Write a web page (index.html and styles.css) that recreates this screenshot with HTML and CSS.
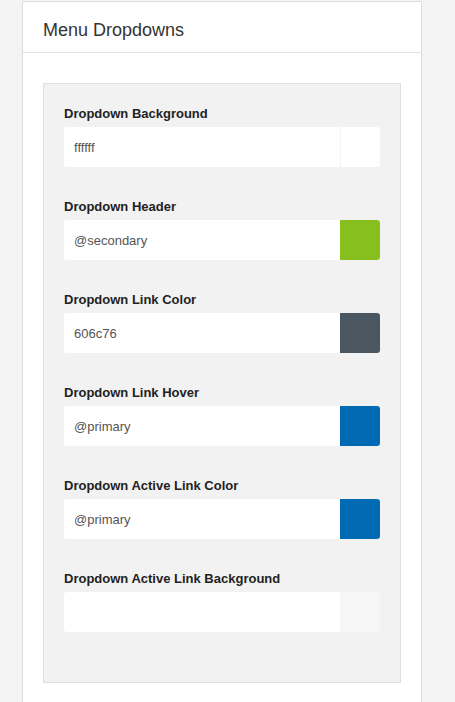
FILE: index.html
```html
<!DOCTYPE html>
<html>
<head>
<meta charset="utf-8">
<link rel="stylesheet" href="styles.css">
</head>
<body>
<div class="card">
  <div class="card-header">Menu Dropdowns</div>
  <div class="card-body">
    <div class="panel">
      <div class="field">
        <div class="label">Dropdown Background</div>
        <div class="input-row"><div class="input">ffffff</div><div class="swatch sw-white"></div></div>
      </div>
      <div class="field">
        <div class="label">Dropdown Header</div>
        <div class="input-row"><div class="input">@secondary</div><div class="swatch sw-green"></div></div>
      </div>
      <div class="field">
        <div class="label">Dropdown Link Color</div>
        <div class="input-row"><div class="input">606c76</div><div class="swatch sw-slate"></div></div>
      </div>
      <div class="field">
        <div class="label">Dropdown Link Hover</div>
        <div class="input-row"><div class="input">@primary</div><div class="swatch sw-blue"></div></div>
      </div>
      <div class="field">
        <div class="label">Dropdown Active Link Color</div>
        <div class="input-row"><div class="input">@primary</div><div class="swatch sw-blue"></div></div>
      </div>
      <div class="field">
        <div class="label">Dropdown Active Link Background</div>
        <div class="input-row"><div class="input"></div><div class="swatch sw-empty"></div></div>
      </div>
    </div>
  </div>
</div>
</body>
</html>
```
FILE: styles.css
```css
html, body {
  margin: 0;
  padding: 0;
  background: #f3f3f3;
  font-family: "Liberation Sans", Arial, sans-serif;
}
.card {
  margin: 1px 0 0 22px;
  width: 398px;
  background: #fff;
  border: 1px solid #dddddd;
  border-bottom: none;
  min-height: 720px;
}
.card-header {
  height: 51px;
  box-sizing: border-box;
  padding: 6px 20px 0 20px;
  display: flex;
  align-items: center;
  font-size: 18px;
  color: #333;
  border-bottom: 1px solid #e2e2e2;
}
.card-body {
  padding: 30px 20px 0 20px;
}
.panel {
  background: #f2f2f2;
  border: 1px solid #dedede;
  padding: 21px 20px 19px 20px;
}
.field {
  margin-bottom: 31px;
}
.label {
  font-size: 13px;
  font-weight: bold;
  color: #222;
  line-height: 18px;
  margin-bottom: 4px;
}
.input-row {
  display: flex;
  height: 40px;
  width: 316px;
}
.input {
  flex: 1;
  background: #fff;
  border-radius: 3px 0 0 3px;
  font-size: 13px;
  color: #555;
  display: flex;
  align-items: center;
  padding-left: 10px;
}
.swatch {
  width: 40px;
  border-radius: 0 3px 3px 0;
}
.sw-white { background: #fff; border-left: 1px solid #f4f4f4; width: 39px; }
.sw-green { background: #86bf1e; }
.sw-slate { background: #4a5761; }
.sw-blue { background: #006bb2; }
.sw-empty { background: #f6f6f6; }
```
